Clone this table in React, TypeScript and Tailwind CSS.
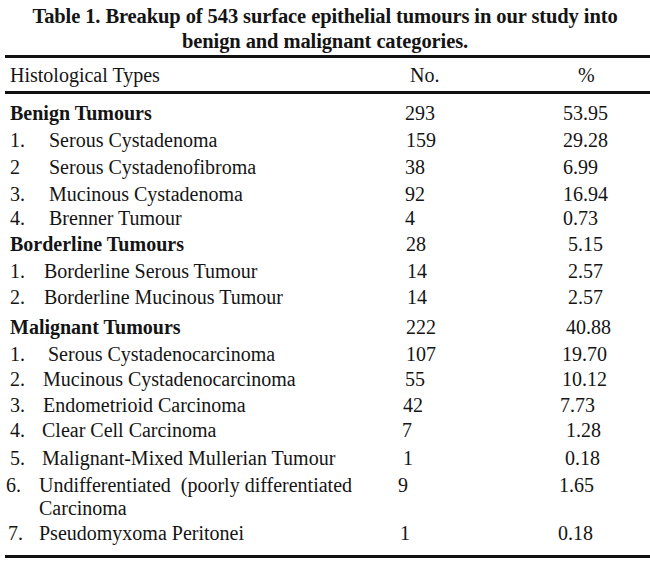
type Row = {
  head?: boolean;
  num?: string;
  label: string;
  label2?: string;
  n: string;
  p: string;
  h: string;
  pad?: string;
  ind?: string;
  np: string;
  pp: string;
};

// row heights follow the scan's uneven line pitch
const rows: Row[] = [
  { head: true, label: "Benign Tumours", n: "293", p: "53.95", h: "h-[27px]", np: "pl-[7px]", pp: "pl-[5px]" },
  { num: "1.", label: "Serous Cystadenoma", n: "159", p: "29.28", h: "h-[27px]", ind: "w-[39px]", np: "pl-[8px]", pp: "pl-[5px]" },
  { num: "2", label: "Serous Cystadenofibroma", n: "38", p: "6.99", h: "h-[27px]", ind: "w-[39px]", np: "pl-[7px]", pp: "pl-[5px]" },
  { num: "3.", label: "Mucinous Cystadenoma", n: "92", p: "16.94", h: "h-[24px]", ind: "w-[39px]", np: "pl-[7px]", pp: "pl-[5px]" },
  { num: "4.", label: "Brenner Tumour", n: "4", p: "0.73", h: "h-[26px]", ind: "w-[39px]", np: "pl-[7px]", pp: "pl-[5px]" },
  { head: true, label: "Borderline Tumours", n: "28", p: "5.15", h: "h-[27px]", np: "pl-[8px]", pp: "pl-[10px]" },
  { num: "1.", label: "Borderline Serous Tumour", n: "14", p: "2.57", h: "h-[26px]", ind: "w-[34px]", np: "pl-[9px]", pp: "pl-[10px]" },
  { num: "2.", label: "Borderline Mucinous Tumour", n: "14", p: "2.57", h: "h-[30px]", ind: "w-[34px]", np: "pl-[9px]", pp: "pl-[10px]" },
  { head: true, label: "Malignant Tumours", n: "222", p: "40.88", h: "h-[27px]", np: "pl-[8px]", pp: "pl-[8px]" },
  { num: "1.", label: "Serous Cystadenocarcinoma", n: "107", p: "19.70", h: "h-[25px]", ind: "w-[38px]", np: "pl-[8px]", pp: "pl-[4px]" },
  { num: "2.", label: "Mucinous Cystadenocarcinoma", n: "55", p: "10.12", h: "h-[26px]", ind: "w-[33px]", np: "pl-[7px]", pp: "pl-[4px]" },
  { num: "3.", label: "Endometrioid Carcinoma", n: "42", p: "7.73", h: "h-[25px]", ind: "w-[33px]", np: "pl-[5px]", pp: "pl-[2px]" },
  { num: "4.", label: "Clear Cell Carcinoma", n: "7", p: "1.28", h: "h-[28px]", ind: "w-[32px]", np: "pl-[4px]", pp: "pl-[8px]" },
  { num: "5.", label: "Malignant-Mixed Mullerian Tumour", n: "1", p: "0.18", h: "h-[27px]", ind: "w-[32px]", np: "pl-[5px]", pp: "pl-[7px]" },
  {
    num: "6.",
    label: "Undifferentiated\u00a0 (poorly differentiated",
    label2: "Carcinoma",
    n: "9",
    p: "1.65",
    h: "h-[48px]",
    pad: "pl-[1px]",
    ind: "w-[33px]",
    np: "pl-[0px]",
    pp: "pl-[1px]",
  },
  { num: "7.", label: "Pseudomyxoma Peritonei", n: "1", p: "0.18", h: "h-[26px]", pad: "pl-[3px]", ind: "w-[31px]", np: "pl-[2px]", pp: "pl-[0px]" },
];

export default function App() {
  return (
    <div className="w-[650px] h-[562px] overflow-hidden bg-white text-[#141414] font-[family-name:'Liberation_Serif','Times_New_Roman',serif]">
      <div className="pt-[4px] text-center font-bold text-[20.5px] leading-[25px] tracking-[-0.1px]">
        <p>Table 1. Breakup of 543 surface epithelial tumours in our study into</p>
        <p>benign and malignant categories.</p>
      </div>

      <div className="ml-[5px] mt-[1px]">
        <div className="h-[3px] bg-[#111]" />
        <div className="grid grid-cols-[393px_160px_1fr] h-[33px] items-center text-[20px]">
          <span className="pl-[5px]">Histological Types</span>
          <span className="pl-[12px]">No.</span>
          <span className="pl-[20px]">%</span>
        </div>
        <div className="h-[3px] bg-[#111]" />

        <div className="pt-[6px] text-[20px] leading-[26px]">
          {rows.map((r, i) => (
            <div key={i} className={`grid grid-cols-[393px_160px_1fr] items-start ${r.h}`}>
              {r.head ? (
                <span className="pl-[5px] font-bold">{r.label}</span>
              ) : (
                <div className={`flex ${r.pad ?? "pl-[5px]"}`}>
                  <span className={`${r.ind} shrink-0`}>{r.num}</span>
                  <div>
                    <div>{r.label}</div>
                    {r.label2 && <div className="-mt-[3px]">{r.label2}</div>}
                  </div>
                </div>
              )}
              <span className={r.np}>{r.n}</span>
              <span className={r.pp}>{r.p}</span>
            </div>
          ))}
        </div>
        <div className="mt-[9px] h-[3px] bg-[#111]" />
      </div>
    </div>
  );
}
